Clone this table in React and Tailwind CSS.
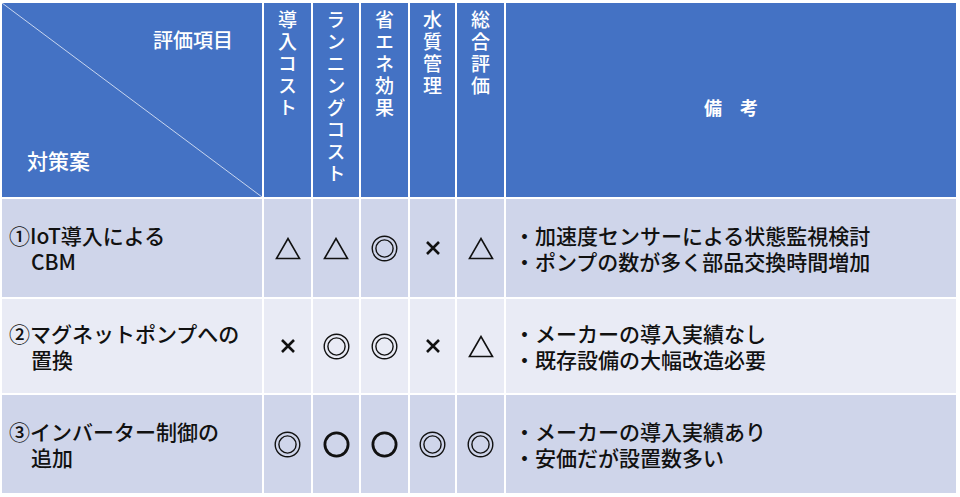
import React from "react";

const font = { fontFamily: '"Noto Sans CJK JP", "Noto Sans", sans-serif' };

function Tri() {
  return (
    <svg width="26" height="23" viewBox="0 0 26 23">
      <polygon points="1.5,21.5 13,1.5 24.5,21.5" fill="none" stroke="#111" strokeWidth="1.6" strokeLinejoin="miter" />
    </svg>
  );
}
function Dbl() {
  return (
    <svg width="27" height="27" viewBox="0 0 27 27">
      <circle cx="13.5" cy="13.5" r="12.3" fill="none" stroke="#111" strokeWidth="1.4" />
      <circle cx="13.5" cy="13.5" r="8.6" fill="none" stroke="#111" strokeWidth="1.4" />
    </svg>
  );
}
function Cir() {
  return (
    <svg width="27" height="27" viewBox="0 0 27 27">
      <circle cx="13.5" cy="13.5" r="11.6" fill="none" stroke="#111" strokeWidth="2.8" />
    </svg>
  );
}
function Cross() {
  return (
    <svg width="16" height="16" viewBox="0 0 16 16">
      <path d="M2 2 L14 14 M14 2 L2 14" stroke="#111" strokeWidth="2.6" strokeLinecap="butt" />
    </svg>
  );
}

const SYM = { t: Tri, d: Dbl, c: Cir, x: Cross };

const rows = [
  {
    bg: "bg-[#cfd5ea]",
    name: ["①IoT導入による", "CBM"],
    syms: ["t", "t", "d", "x", "t"],
    notes: ["・加速度センサーによる状態監視検討", "・ポンプの数が多く部品交換時間増加"],
  },
  {
    bg: "bg-[#e9ebf5]",
    name: ["②マグネットポンプへの", "置換"],
    syms: ["x", "d", "d", "x", "t"],
    notes: ["・メーカーの導入実績なし", "・既存設備の大幅改造必要"],
  },
  {
    bg: "bg-[#cfd5ea]",
    name: ["③インバーター制御の", "追加"],
    syms: ["d", "c", "c", "d", "d"],
    notes: ["・メーカーの導入実績あり", "・安価だが設置数多い"],
  },
];

const heads = ["導入コスト", "ランニングコスト", "省エネ効果", "水質管理", "総合評価"];

export default function App() {
  return (
    <div className="w-[960px] h-[497px] bg-white pl-[2px] pt-[3px] overflow-hidden" style={font}>
      <div className="grid grid-cols-[260px_47px_46px_47px_45px_47px_450px] grid-rows-[194px_98px_94px_98px] gap-[2px] bg-white w-[954px]">
        {/* header corner */}
        <div className="relative bg-[#4472c4] text-white flex flex-col justify-between pt-[23px] pb-[23px] text-[20px] leading-[28px] font-medium">
          <svg className="absolute inset-0 w-full h-full" preserveAspectRatio="none" viewBox="0 0 100 100">
            <line x1="0" y1="0" x2="100" y2="100" stroke="#c9d6ef" strokeWidth="1" vectorEffect="non-scaling-stroke" />
          </svg>
          <div className="relative self-end mr-[29px]">評価項目</div>
          <div className="relative self-start ml-[25px] text-[21px]">対策案</div>
        </div>
        {heads.map((h) => (
          <div key={h} className="bg-[#4472c4] text-white flex justify-center pt-[7px]">
            <div className="[writing-mode:vertical-rl] text-[19px] tracking-[3px] leading-none font-medium">{h}</div>
          </div>
        ))}
        <div className="bg-[#4472c4] text-white flex items-center justify-center pt-[15px] text-[18px] font-bold">
          備　考
        </div>

        {rows.map((r, i) => (
          <React.Fragment key={i}>
            <div className={`${r.bg} flex flex-col justify-center pl-[7px] text-[21px] leading-[26px] text-[#111] font-medium`}>
              <div>{r.name[0]}</div>
              <div className="pl-[22px]">{r.name[1]}</div>
            </div>
            {r.syms.map((s, j) => {
              const S = SYM[s];
              return (
                <div key={j} className={`${r.bg} flex items-center justify-center`}>
                  <S />
                </div>
              );
            })}
            <div className={`${r.bg} flex flex-col justify-center pl-[8px] text-[21px] leading-[26px] text-[#111] font-medium`}>
              {r.notes.map((n) => (
                <div key={n}>{n}</div>
              ))}
            </div>
          </React.Fragment>
        ))}
      </div>
    </div>
  );
}
